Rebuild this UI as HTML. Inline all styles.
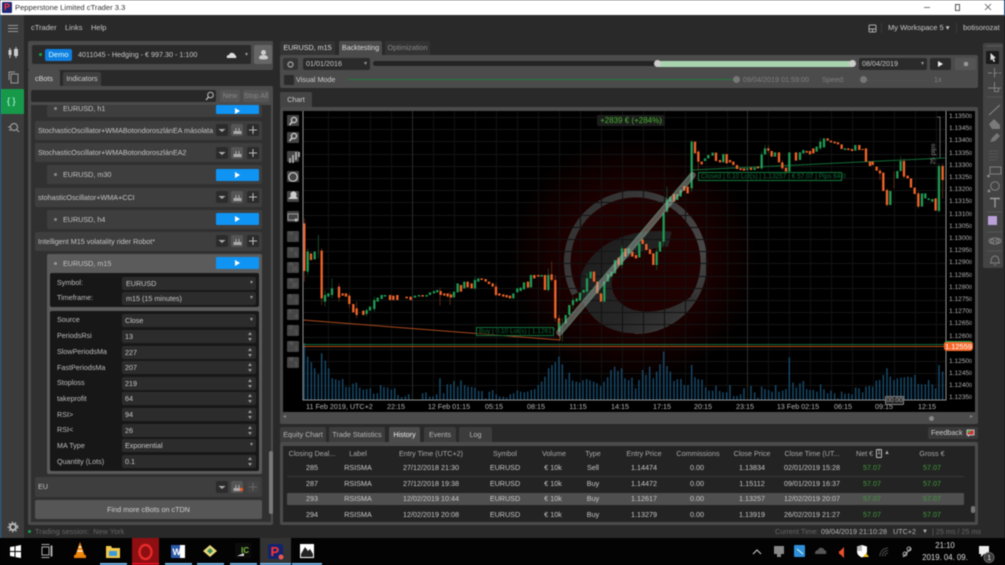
<!DOCTYPE html>
<html><head><meta charset="utf-8"><title>cTrader</title>
<style>
html,body{margin:0;padding:0;width:1005px;height:565px;overflow:hidden;background:#000}
#w{position:absolute;left:0;top:0;width:1005px;height:565px;overflow:hidden;background:#292929;font-family:"Liberation Sans",sans-serif;font-size:7.2px;color:#c8c8c8;filter:blur(.4px)}
#w div{position:absolute;box-sizing:border-box}
.t{white-space:nowrap;line-height:10px;height:10px}
.c{transform:translateX(-50%)}
.tab{background:#3c3c3c;border-radius:2px 2px 0 0;text-align:center;line-height:15px;color:#b8b8b8;white-space:nowrap}
.on{background:#4b4b4b;color:#ddd}
.row{left:35px;width:227px;background:#3e3e3e;border-radius:2px;height:19px;line-height:19px;padding-left:3px;color:#c4c4c4;white-space:nowrap}
.chi{left:47px;width:215px;background:#3e3e3e;border-radius:2px;height:19px;line-height:19px;padding-left:16px;color:#c4c4c4}
.play{left:216px;width:43px;height:12px;background:#0f94f3;border-radius:1px;color:#fff}
.play:after{content:"";position:absolute;left:19px;top:3px;border-left:5px solid #fff;border-top:3px solid transparent;border-bottom:3px solid transparent}
.b{width:12px;height:12px;background:#2b2b2b;border-radius:2px}
.f{left:122px;width:134px;height:13px;background:#2c2c2c;border-radius:2px;line-height:13px;padding-left:3px;color:#c8c8c8}
.l{left:57px;color:#bdbdbd}
.ar:after{content:"▾";position:absolute;right:3px;top:0;font-size:6px;color:#999}
.sp:after{content:"";position:absolute;right:4px;top:2px;border-bottom:3px solid #999;border-left:2px solid transparent;border-right:2px solid transparent}
.sp:before{content:"";position:absolute;right:4px;bottom:2px;border-top:3px solid #999;border-left:2px solid transparent;border-right:2px solid transparent}
.cb{left:287px;width:12px;height:11px;background:#454545;border-radius:1px;color:#6a6a6a;font-size:5px;line-height:6px;padding-left:2px}
.cb span{position:absolute;right:1.500px;bottom:0;line-height:5px}
.y{left:949px;color:#b0b0b0;font-size:6.600px}
.y small{font-size:5px}
.x{top:402px;color:#b4b4b4}
.g{color:#3f9a3a}
svg{position:absolute;overflow:visible}
</style></head><body>
<div id="w">
<!-- title bar -->
<div style="left:0;top:0;width:1005px;height:15px;background:#fff"></div>
<div style="left:2px;top:2px;width:10px;height:11px;background:#1c2a78;border-radius:1px"></div>
<div style="left:4px;top:3px;color:#f33;font:bold 9px 'Liberation Sans',sans-serif;line-height:9px">P</div>
<div class="t" style="left:15px;top:3px;color:#333;font-size:7.600px">Pepperstone Limited cTrader 3.3</div>
<div style="left:924px;top:7px;width:6px;height:1px;background:#777"></div>
<div style="left:955px;top:4px;width:5px;height:7px;border:1px solid #555"></div>
<svg style="left:984px;top:3px" width="8" height="8"><path d="M1 1L7 7M7 1L1 7" stroke="#555" stroke-width=".8"/></svg>
<div style="left:1004px;top:0;width:1px;height:16px;background:#3b78b5"></div>

<!-- left sidebar -->
<div style="left:0;top:15px;width:24px;height:523px;background:#3b3b3b;border-left:1px solid #3877b0"></div>
<div style="left:8px;top:25px;width:10px;height:1.300px;background:#999;box-shadow:0 3px 0 #999,0 6px 0 #999"></div>
<svg style="left:7px;top:47px" width="12" height="12"><path d="M3 1V11M9 0V11" stroke="#bbb" stroke-width="1"/><rect x="1.500" y="3" width="3" height="5" fill="#ccc"/><rect x="7" y="2" width="4" height="7" fill="#ccc"/></svg>
<svg style="left:8px;top:71px" width="11" height="13"><rect x="3" y="3" width="7" height="9" fill="none" stroke="#999"/><path d="M1 9V1H7" fill="none" stroke="#999"/></svg>
<div style="left:1px;top:89px;width:23px;height:25px;background:#169a4a"></div>
<div class="t" style="left:7px;top:96px;font-size:9px;color:#cfe">{ }</div>
<svg style="left:7px;top:121px" width="13" height="13"><circle cx="7" cy="6" r="3.500" fill="none" stroke="#999" stroke-width="1.200"/><path d="M9.500 8.500L12 11M1 6H3M2 9H4" stroke="#999" stroke-width="1.200"/></svg>
<svg style="left:7px;top:521px" width="12" height="12"><circle cx="6" cy="6" r="3" fill="none" stroke="#bbb" stroke-width="2"/><circle cx="6" cy="6" r="4.800" fill="none" stroke="#bbb" stroke-width="1.200" stroke-dasharray="1.500 2"/></svg>

<!-- menu -->
<div class="t" style="left:31px;top:23px;font-size:7.500px">cTrader</div>
<div class="t" style="left:65px;top:23px;font-size:7.500px">Links</div>
<div class="t" style="left:91px;top:23px;font-size:7.500px">Help</div>
<svg style="left:868px;top:24px" width="9" height="9"><rect x="1" y="1" width="7" height="7" rx="1" fill="none" stroke="#aaa"/><path d="M1 5H8M4.500 5V8" fill="none" stroke="#aaa"/></svg>
<div style="left:881px;top:23px;width:1px;height:10px;background:#3a3a3a"></div>
<div class="t" style="left:888px;top:23px;font-size:7.500px">My Workspace 5 ▾</div>
<div style="left:956px;top:23px;width:1px;height:10px;background:#3a3a3a"></div>
<div class="t" style="left:963px;top:23px;font-size:7.500px">botisorozat</div>

<!-- account -->
<div style="left:28px;top:41px;width:245px;height:29px;background:#4a4a4a;border-radius:2px"></div>
<div style="left:32px;top:45px;width:219px;height:19px;background:#2a2a2a;border-radius:2px"></div>
<div style="left:39px;top:53px;width:3px;height:3px;background:#19a04a;border-radius:50%"></div>
<div style="left:45px;top:49px;width:27px;height:12px;background:#0e7fe0;border-radius:2px;color:#dff;text-align:center;line-height:12px;font-size:7.500px">Demo</div>
<div class="t" style="left:78px;top:50px;color:#c8c8c8">4011045 - Hedging - € 997.30 - 1:100</div>
<svg style="left:226px;top:52px" width="11" height="7"><path d="M1 6Q0 3 3 3Q4 0 7 1Q9 2 9 3Q11 4 10 6Z" fill="#ddd"/></svg>
<div class="t" style="left:245px;top:50px;font-size:6px;color:#999">▾</div>
<div style="left:254px;top:45px;width:18px;height:19px;background:#666;border-radius:2px"></div>
<svg style="left:258px;top:49px" width="11" height="11"><circle cx="5.500" cy="3.500" r="2.500" fill="#ccc"/><path d="M1 9Q1 6 5.500 6Q10 6 10 9Q10 10.500 5.500 10.500Q1 10.500 1 9Z" fill="#ccc"/></svg>

<!-- cbots panel -->
<div class="tab on" style="left:28px;top:70px;width:32px;height:16px;line-height:17px">cBots</div>
<div class="tab" style="left:63px;top:72px;width:38px;height:14px;line-height:14px;background:#3f3f3f;color:#ccc">Indicators</div>
<div style="left:28px;top:86px;width:245px;height:439px;background:#4b4b4b;border-radius:0 2px 2px 2px"></div>
<div style="left:31px;top:90px;width:185px;height:12px;background:#282828;border-radius:2px"></div>
<svg style="left:205px;top:91px" width="10" height="10"><circle cx="5.500" cy="4" r="2.800" fill="none" stroke="#bbb"/><path d="M3.500 6L1 9" stroke="#bbb" stroke-width="1.300"/></svg>
<div style="left:220px;top:90px;width:20px;height:12px;background:#555;border-radius:2px;color:#888;text-align:center;line-height:12px">New</div>
<div style="left:243px;top:90px;width:26px;height:12px;background:#555;border-radius:2px;color:#888;text-align:center;line-height:12px;white-space:nowrap">Stop All</div>
<div style="left:31px;top:105px;width:240px;height:417px;background:#303030"></div>

<div class="chi" style="top:105px;height:12px;line-height:7px">EURUSD, h1</div>
<div class="play" style="top:105px;height:9px"></div>
<div class="row" style="top:121px">StochasticOscillator+WMABotondoroszlánEA másolata</div>
<div class="row" style="top:143px">StochasticOscillator+WMABotondoroszlánEA2</div>
<div class="chi" style="top:165px">EURUSD, m30</div><div class="play" style="top:169px"></div>
<div class="row" style="top:188px">stohasticOscillator+WMA+CCI</div>
<div class="chi" style="top:210px">EURUSD, h4</div><div class="play" style="top:213px"></div>
<div class="row" style="top:232px">Intelligent M15 volatality rider Robot*</div>
<div class="chi" style="top:254px;height:220px;background:#5b5b5b">EURUSD, m15</div><div class="play" style="top:257px"></div>
<div style="left:50px;top:273px;width:209px;height:34px;background:#171717;border-radius:2px"></div>
<div style="left:50px;top:311px;width:209px;height:160px;background:#171717;border-radius:2px"></div>
<div class="t l" style="top:278px">Symbol:</div><div class="f ar" style="top:277px;padding-left:4px">EURUSD</div>
<div class="t l" style="top:293px">Timeframe:</div><div class="f ar" style="top:292px;padding-left:4px">m15 (15 minutes)</div>
<div class="t l" style="top:315px">Source</div><div class="f ar" style="top:314px">Close</div>
<div class="t l" style="top:331px">PeriodsRsi</div><div class="f sp" style="top:330px">13</div>
<div class="t l" style="top:347px">SlowPeriodsMa</div><div class="f sp" style="top:346px">227</div>
<div class="t l" style="top:363px">FastPeriodsMa</div><div class="f sp" style="top:361px">207</div>
<div class="t l" style="top:378px">Stoploss</div><div class="f sp" style="top:377px">219</div>
<div class="t l" style="top:394px">takeprofit</div><div class="f sp" style="top:392px">64</div>
<div class="t l" style="top:410px">RSI&gt;</div><div class="f sp" style="top:408px">94</div>
<div class="t l" style="top:425px">RSI&lt;</div><div class="f sp" style="top:424px">26</div>
<div class="t l" style="top:441px">MA Type</div><div class="f ar" style="top:439px">Exponential</div>
<div class="t l" style="top:457px">Quantity (Lots)</div><div class="f sp" style="top:455px">0.1</div>
<div class="row" style="top:477px;height:20px;line-height:20px">EU</div>
<div style="left:35px;top:500px;width:227px;height:19px;background:#565656;border-radius:2px;color:#d0d0d0;text-align:center;line-height:19px">Find more cBots on cTDN</div>
<div class="b" style="left:216px;top:124px"></div><div class="b" style="left:231px;top:124px;background:#555"></div><div class="b" style="left:247px;top:124px"></div>
<div class="b" style="left:216px;top:147px"></div><div class="b" style="left:231px;top:147px;background:#555"></div><div class="b" style="left:247px;top:147px"></div>
<div class="b" style="left:216px;top:191px"></div><div class="b" style="left:231px;top:191px;background:#555"></div><div class="b" style="left:247px;top:191px"></div>
<div class="b" style="left:216px;top:235px"></div><div class="b" style="left:231px;top:235px;background:#555"></div><div class="b" style="left:247px;top:235px"></div>
<div class="b" style="left:216px;top:481px"></div><div class="b" style="left:231px;top:481px;background:#555"></div><div class="b" style="left:247px;top:481px;background:#444"></div>
<svg style="left:0;top:0" width="1005" height="565" fill="none" stroke="#bdbdbd"><path d="M249 130h8M253 126v8M249 153h8M253 149v8M249 197h8M253 193v8M249 241h8M253 237v8"/><path d="M249 487h8M253 483v8" stroke="#666"/><path d="M218.500 129l3.500 3 3.500-3zM218.500 152l3.500 3 3.500-3zM218.500 196l3.500 3 3.500-3zM218.500 240l3.500 3 3.500-3zM218.500 486l3.500 3 3.500-3z" fill="#aaa" stroke="none"/><path d="M233.500 134v-3h2v-3h1v3h2v-3h1v3h2v3zM233.500 157v-3h2v-3h1v3h2v-3h1v3h2v3zM233.500 201v-3h2v-3h1v3h2v-3h1v3h2v3zM233.500 245v-3h2v-3h1v3h2v-3h1v3h2v3zM233.500 491v-3h2v-3h1v3h2v-3h1v3h2v3z" fill="#aaa" stroke="none"/><rect x="240" y="488" width="3" height="3" fill="#f05a1e" stroke="none"/></svg>
<div style="left:269px;top:451px;width:4px;height:63px;background:#7a7a7a;border-radius:2px"></div>
<div style="left:54px;top:107px;width:3px;height:3px;border-radius:50%;background:#888"></div>
<div style="left:54px;top:173px;width:3px;height:3px;border-radius:50%;background:#888"></div>
<div style="left:54px;top:218px;width:3px;height:3px;border-radius:50%;background:#888"></div>
<div style="left:54px;top:262px;width:3px;height:3px;border-radius:50%;background:#999"></div>
<div style="left:28px;top:530px;width:3px;height:3px;border-radius:50%;background:#19a04a"></div>
<div class="t" style="left:35px;top:527px;color:#666;letter-spacing:.1px">Trading session: &nbsp;New York</div>

<!-- top tabs -->
<div class="tab on" style="left:280px;top:41px;width:55px;height:14px;background:#333;line-height:14px">EURUSD, m15</div>
<div class="tab on" style="left:339px;top:41px;width:43px;height:14px;line-height:14px;background:#4b4b4b">Backtesting</div>
<div class="tab" style="left:385px;top:41px;width:45px;height:14px;line-height:14px;background:#333;color:#888">Optimization</div>
<div style="left:280px;top:55px;width:698px;height:33px;background:#4b4b4b;border-radius:2px"></div>
<div style="left:283px;top:58px;width:15px;height:12px;background:#333;border-radius:2px"></div>
<svg style="left:286px;top:59.500px" width="9" height="9"><circle cx="4.500" cy="4.500" r="2.500" fill="none" stroke="#999" stroke-width="1.400"/></svg>
<div class="f ar" style="left:303px;top:58px;width:67px;height:12px;line-height:12px;background:#2a2a2a">01/01/2016</div>
<div style="left:373px;top:61px;width:285px;height:5px;background:#242424;border-radius:3px"></div>
<div style="left:657px;top:61px;width:196px;height:6px;background:#a8d3ae"></div>
<div style="left:654px;top:60px;width:7px;height:7px;background:#ccc;border-radius:50%"></div>
<div style="left:849px;top:60px;width:7px;height:7px;background:#ccc;border-radius:50%"></div>
<div class="f ar" style="left:859px;top:58px;width:68px;height:12px;line-height:12px;background:#2a2a2a">08/04/2019</div>
<div style="left:930px;top:58px;width:21px;height:12px;background:#2a2a2a;border-radius:2px"></div>
<div style="left:938px;top:61px;border-left:5px solid #eee;border-top:3px solid transparent;border-bottom:3px solid transparent"></div>
<div style="left:955px;top:58px;width:21px;height:12px;background:#555;border-radius:2px"></div>
<div style="left:964px;top:62px;width:4px;height:4px;background:#999"></div>
<div style="left:284px;top:75px;width:10px;height:10px;background:#2a2a2a;border-radius:1px"></div>
<div class="t" style="left:296px;top:75px;color:#ccc">Visual Mode</div>
<div style="left:348px;top:79px;width:389px;height:1px;background:#1f7a3e"></div>
<div style="left:733px;top:76px;width:7px;height:7px;background:#777;border-radius:50%"></div>
<div class="t" style="left:743px;top:75px;color:#7f7f7f">09/04/2019 01:59:00</div>
<div class="t" style="left:822px;top:75px;color:#7f7f7f">Speed:</div>
<div style="left:860px;top:76px;width:7px;height:7px;background:#777;border-radius:50%"></div>
<div style="left:867px;top:79.500px;width:60px;height:1px;border-top:1px dotted #555"></div>
<div class="t" style="left:934px;top:75px;color:#7f7f7f">1x</div>

<!-- right toolbar -->
<div style="left:983px;top:43px;width:20px;height:225px;background:#434343;border-radius:2px"></div>
<div style="left:986px;top:51px;width:13px;height:13px;background:#1b1b1b;border-radius:1px"></div>
<svg style="left:975px;top:40px" width="30" height="235" fill="none" stroke="#808080" stroke-width="1">
<path d="M12 6h15" stroke="#777" stroke-dasharray="1 1"/>
<path d="M15.500 13l5.500 5-2.300.400 1.400 3-1.500.600-1.400-3-1.700 1.500z" fill="#ddd" stroke="none"/>
<path d="M13 33h13M19.500 28v11" stroke-dasharray="4 1.500"/>
<path d="M19.500 42v6M13 48h13"/><rect x="19.500" y="48" width="4" height="3.500"/>
<path d="M12 57h15" stroke="#555"/>
<path d="M14 75L25 65" stroke="#8a8a8a"/>
<path d="M14 84l5-5 6 6v4h-8z" fill="#7a7a7a" stroke="none"/>
<path d="M15 102l2-4 5-5 3 3-5 5z" fill="#777" stroke="none"/>
<path d="M14 111h10M14 114h10M14 117h10M14 120h7" stroke="#666" stroke-dasharray="1 1"/>
<rect x="15" y="127" width="11" height="7"/><circle cx="13.500" cy="136" r="1" fill="#999"/>
<circle cx="20" cy="146" r="4.300"/><circle cx="14" cy="151" r="1" fill="#999"/>
<path d="M15 158.500h10M20 158.500v9" stroke="#9a9a9a" stroke-width="1.400"/>
<path d="M12 172h15M12 192h15M12 211h15" stroke="#555"/>
<ellipse cx="20" cy="201" rx="6" ry="3"/><circle cx="17.500" cy="201" r="1.500"/><circle cx="22.500" cy="201" r="1.500"/>
<path d="M16 223q0-7 4-7t4 7zM15 223h10M19 225h2"/>
</svg>
<div style="left:988px;top:216px;width:9px;height:9px;background:#b9a0d8"></div>

<!-- chart panel -->
<div class="tab on" style="left:280px;top:92px;width:32px;height:15px;background:#444;color:#ccc;line-height:16px">Chart</div>
<div style="left:280px;top:107px;width:698px;height:317px;background:#4b4b4b;border-radius:2px"></div>
<div style="left:283px;top:111px;width:692px;height:301px;background:#000"></div>
<div style="left:303px;top:111px;width:643px;height:289px;background:radial-gradient(circle 125px at 330px 150px,#270000 0,#200000 50%,#0c0000 82%,#000 100%)"></div>
<div class="cb" style="top:115px"></div><div class="cb" style="top:132px"></div><div class="cb" style="top:151px"></div><div class="cb" style="top:171px"></div><div class="cb" style="top:191px"></div><div class="cb" style="top:211px"></div>
<svg style="left:283px;top:111px" width="20" height="120" fill="none" stroke="#ccc"><circle cx="11" cy="9" r="2.600" stroke-width="1.300"/><path d="M9 11L6.500 14" stroke-width="1.500"/><circle cx="11" cy="25" r="2.600" stroke-width="1.300"/><path d="M9 27L6.500 30" stroke-width="1.500"/><path d="M7 47v5M10 44v8M13 41v8M16 41v5" stroke-width="1.800" stroke="#aaa"/><circle cx="10" cy="66" r="4.300" stroke-width="1.200"/><path d="M8 85a3 3 0 1 1 5 0l2 3H5z" fill="#ccc" stroke="none"/><rect x="5" y="103" width="10" height="6" stroke-width="1" stroke="#999"/><circle cx="13" cy="109" r="1.500" fill="#bbb" stroke="none"/></svg>
<div class="cb" style="top:231px">m<span>1</span></div><div class="cb" style="top:247px">m<span>5</span></div><div class="cb" style="top:262px">m<span>15</span></div><div class="cb" style="top:278px">m<span>30</span></div><div class="cb" style="top:294px">h<span>1</span></div><div class="cb" style="top:309px">h<span>4</span></div><div class="cb" style="top:325px">D<span>1</span></div><div class="cb" style="top:341px">W<span>1</span></div><div class="cb" style="top:357px">M<span>1</span></div>

<svg style="left:0;top:0" width="1005" height="565" fill="none">
<defs><linearGradient id="lg" x1="0" y1="0" x2="1" y2="1"><stop offset="0" stop-color="#1c1c1c"/><stop offset=".6" stop-color="#262626"/><stop offset="1" stop-color="#3e3e3e"/></linearGradient>
<linearGradient id="lr" x1="0" y1="0" x2="1" y2="1"><stop offset="0" stop-color="#2e2e2e"/><stop offset=".7" stop-color="#474747"/><stop offset="1" stop-color="#262626"/></linearGradient></defs>
<!-- logo -->
<g transform="translate(540,170) scale(.3333)">
<circle cx="281" cy="276" r="198" fill="#1f0101"/>
<path d="M105 372A205 205 0 1 1 285 482" stroke="url(#lr)" stroke-width="20"/>
<path d="M395 185C300 175 170 200 125 310C100 400 170 490 285 490C360 490 440 440 475 365C430 400 380 425 320 425C260 425 215 390 215 340C215 280 290 235 385 230Z" fill="url(#lg)"/>
</g>
<!-- grid -->
<path stroke="#141414" stroke-width="1" d="M303 117.500h643M303 129.500h643M303 141.500h643M303 154.500h643M303 166.500h643M303 178.500h643M303 190.500h643M303 202.500h643M303 215.500h643M303 227.500h643M303 239.500h643M303 251.500h643M303 263.500h643M303 276.500h643M303 288.500h643M303 300.500h643M303 312.500h643M303 324.500h643M303 337.500h643M303 349.500h643M303 361.500h643M303 373.500h643M303 385.500h643"/>
<path stroke="#111" stroke-width="1" d="M328.500 111v289M349.500 111v289M370.500 111v289M391.500 111v289M433.500 111v289M454.500 111v289M475.500 111v289M496.500 111v289M517.500 111v289M538.500 111v289M559.500 111v289M580.500 111v289M601.500 111v289M622.500 111v289M643.500 111v289M664.500 111v289M685.500 111v289M706.500 111v289M727.500 111v289M768.500 111v289M789.500 111v289M810.500 111v289M831.500 111v289M852.500 111v289M873.500 111v289M894.500 111v289M915.500 111v289M936.500 111v289"/>
<path stroke="#2b2b2b" d="M412.500 111v289M747.500 111v289"/>

<!-- volumes -->
<g transform="translate(280,105) scale(.3333)" stroke="#174c6e" stroke-width="4.200">
<path d="M73 885V715M83 885V755M94 885V772M104 885V790M115 885V808M125 885V745M136 885V767M146 885V790M157 885V820M167 885V823M177 885V826M188 885V822M198 885V846M208 885V846M219 885V836M229 885V833M239 885V848M250 885V854M260 885V852M271 885V850M281 885V866M292 885V865M302 885V840M312 885V846M323 885V848M334 885V854M344 885V850M354 885V870M365 885V876M376 885V874M386 885V868M428 885V865M438 885V862M449 885V875M459 885V874M470 885V868M480 885V820M491 885V865M502 885V838M512 885V838M522 885V828M533 885V845M543 885V826M554 885V840M564 885V845M575 885V846M585 885V848M596 885V858M606 885V858M617 885V880M628 885V860M638 885V855M649 885V868M659 885V875M670 885V875M680 885V878M691 885V868M701 885V865M712 885V856M722 885V860M733 885V862M743 885V860M754 885V855M764 885V852M775 885V840M785 885V830M795 885V815M806 885V790M816 885V780M826 885V772M837 885V755M847 885V778M858 885V822M868 885V803M878 885V827M889 885V830M899 885V833M909 885V826M920 885V822M930 885V826M941 885V830M951 885V835M962 885V843M972 885V830M983 885V817M993 885V795M1004 885V785M1014 885V798M1025 885V790M1035 885V820M1046 885V825M1056 885V818M1067 885V850M1077 885V825"/>
</g>
<g transform="translate(640,105) scale(.3333)" stroke="#174c6e" stroke-width="4.200">
<path d="M8 885V795M18 885V810M29 885V785M40 885V820M50 885V800M60 885V778M71 885V740M81 885V783M91 885V800M102 885V828M112 885V823M123 885V822M133 885V840M144 885V840M155 885V780M165 885V817M175 885V823M186 885V824M197 885V847M207 885V857M218 885V857M228 885V842M239 885V858M249 885V862M260 885V862M270 885V840M281 885V873M291 885V873M302 885V868M312 885V850M333 885V843M344 885V862M354 885V878M365 885V845M375 885V852M386 885V855M396 885V860M407 885V840M417 885V860M428 885V857M438 885V852M448 885V757M459 885V833M469 885V848M480 885V835M490 885V828M500 885V852M510 885V855M520 885V855M531 885V860M542 885V838M552 885V853M563 885V865M573 885V857M584 885V865M594 885V880M605 885V860M615 885V866M626 885V865M636 885V868M647 885V848M657 885V850M668 885V862M678 885V845M688 885V843M698 885V845M709 885V827M719 885V825M730 885V810M741 885V790M751 885V815M762 885V825M772 885V820M783 885V818M793 885V817M804 885V815M814 885V817M825 885V810M835 885V837M845 885V838M856 885V838M866 885V825M877 885V838M887 885V850M897 885V780M908 885V800"/>
</g>

<!-- lines -->
<path d="M303 320L560 340" stroke="#a8481c" stroke-width="1"/>
<path d="M560 340V335" stroke="#a8481c"/>
<path d="M303 344.500H946" stroke="#156c38"/>
<path d="M303 346.500H946" stroke="#b84a1c"/>
<path d="M692 170L945 158" stroke="#126b35"/>

<!-- candles -->
<g transform="translate(280,105) scale(.3333)">
<path stroke="#8a3c1a" stroke-width="1.800" d="M73 340V530M115 390V450M125 430V600M177 535V590M208 565V610M230 590V640M480 548V602M510 560V600M648 535V575M815 470V530M826 510V650M837 630V695"/>
<path stroke="#14693a" stroke-width="1.800" d="M83 430V510M115 390V460M135 555V605M156 520V580M260 610V635M283 575V620M585 515V555M805 490V560M847 640V710"/>
<path stroke="#f0642a" stroke-width="7" d="M73 355V498M93 445V465M125 437V580M177 545V578M188 565V572M198 565V575M208 572V597M220 597V622M230 610V630M250 617V630M330 570V585M340 572V585M352 570V585M380 575V580M392 575V585M428 570V575M482 558V570M493 565V572M503 565V575M513 568V578M543 540V560M563 530V547M575 535V550M605 520V525M617 522V530M627 530V537M638 535V545M648 545V570M658 565V572M670 568V575M680 570V577M690 572V580M744 530V548M763 510V520M775 510V515M795 510V555M815 508V525M826 525V640M837 640V680"/>
<path stroke="#1f9a55" stroke-width="7" d="M83 440V500M104 440V463M135 570V590M145 565V575M156 550V570M260 615V627M270 605V617M283 585V612M293 578V590M305 570V582M315 570V575M405 572V578M417 570V575M440 570V575M450 562V570M462 558V565M472 555V562M522 560V577M533 535V562M553 530V550M585 525V550M595 520V530M700 565V580M712 550V562M722 548V558M732 532V553M753 510V547M785 510V515M805 510V555"/>
</g>
<g transform="translate(540,170) scale(.3333)">
<path stroke="#14693a" stroke-width="1.800" d="M58 450V495M99 380V415M141 310V375M246 225V295M350 235V300M371 120V225M381 50V130M455 0V65"/>
<path stroke="#f0642a" stroke-width="7" d="M162 305V335M172 335V370M183 370V395M236 263V285M256 235V260M277 245V260M288 255V265M308 208V222M319 222V240M330 238V252M340 250V285M402 72V95M433 48V62M443 50V70"/>
<path stroke="#1f9a55" stroke-width="7" d="M58 460V485M77 435V460M88 405V435M99 390V405M110 385V395M120 368V392M131 360V368M141 325V365M152 305V325M193 335V395M204 312V335M214 305V320M225 270V310M246 235V285M266 235V250M298 220V262M350 245V285M360 215V245M371 130V215M381 90V125M391 80V95M412 72V90M422 60V80M455 5V55"/>
</g>
<g transform="translate(640,105) scale(.3333)">
<path stroke="#14693a" stroke-width="1.800" d="M155 105V205M365 140V195M375 120V150M541 100V135M782 155V200M897 175V322"/>
<path stroke="#8a3c1a" stroke-width="1.800" d="M175 135V195M385 120V145M427 165V195M720 190V225M741 250V305M762 200V250M792 160V220M835 260V310M908 175V280"/>
<path stroke="#f0642a" stroke-width="7" d="M165 110V145M175 140V170M185 170V178M228 143V168M240 165V172M260 147V175M270 165V172M280 170V180M291 180V192M302 190V195M312 190V197M333 188V195M354 185V190M385 130V137M395 138V155M417 142V172M427 172V190M438 188V200M468 142V167M500 138V143M510 138V148M520 130V145M563 100V107M573 107V112M584 110V115M594 112V118M605 118V132M625 130V135M636 132V138M658 120V135M668 132V135M678 130V170M690 170V183M698 170V180M710 185V197M720 197V205M730 203V258M741 255V300M792 168V215M803 212V220M813 220V248M824 248V267M835 265V305M887 280V317M908 183V225"/>
<path stroke="#1f9a55" stroke-width="7" d="M155 110V200M195 160V168M205 150V160M218 143V152M250 147V172M322 190V195M344 188V195M365 148V190M375 130V148M405 142V155M448 142V200M480 142V165M490 135V145M530 125V140M541 110V130M552 100V127M615 130V135M646 120V137M751 258V300M772 198V220M782 168V198M846 265V305M856 265V280M866 280V285M877 282V290M897 183V318"/>
</g>
<!-- selected trade band -->
<g transform="translate(540,170) scale(.3333)">
<path d="M58 488L458 15" stroke="#b9b9b9" stroke-opacity=".45" stroke-width="19" stroke-linecap="round"/>
<path d="M54 482L452 12M64 492L462 20" stroke="#2fb06a" stroke-opacity=".55" stroke-width="1.800"/>
</g>
<!-- pips marker -->
<path d="M937 117H940V158" stroke="#777" stroke-width=".8" fill="none"/>
<!-- axes -->
<path d="M303 111V400H946V111" stroke="#8f8f8f" stroke-width="1"/>
</svg>
<div class="t" style="left:919px;top:149px;font-size:6.500px;color:#888;transform:rotate(-90deg);transform-origin:center;width:30px;text-align:center">25 pips</div>

<!-- trade labels -->
<div style="left:476px;top:327px;width:78px;height:9px;border:1px solid #0f6e38;color:#0e6a35;font-size:6.500px;line-height:7px;white-space:nowrap;padding-left:2px;background:rgba(0,0,0,.4)">Buy | 0.10 Lot(s) | 1.12617</div>
<div style="left:698px;top:172px;width:144px;height:8.500px;border:1px solid #0f7a3c;color:#0e7038;font-size:6.500px;line-height:7px;white-space:nowrap;padding-left:2px;background:rgba(0,0,0,.4)">Closed | 0.10 Lot(s) | 1.13257 | € 57.07 | Pips 64.0</div>
<div style="left:597px;top:115px;width:68px;height:11px;background:#1c1c1c;border-radius:2px;color:#46b32f;font-size:8px;line-height:11px;text-align:center;white-space:nowrap">+2839 € (+284%)</div>

<!-- y axis -->
<div class="t y" style="top:112px">1.1350<small>0</small></div><div class="t y" style="top:124px">1.1345<small>0</small></div><div class="t y" style="top:136px">1.1340<small>0</small></div><div class="t y" style="top:149px">1.1335<small>0</small></div><div class="t y" style="top:161px">1.1330<small>0</small></div><div class="t y" style="top:173px">1.1325<small>0</small></div><div class="t y" style="top:185px">1.1320<small>0</small></div><div class="t y" style="top:197px">1.1315<small>0</small></div><div class="t y" style="top:210px">1.1310<small>0</small></div><div class="t y" style="top:222px">1.1305<small>0</small></div><div class="t y" style="top:234px">1.1300<small>0</small></div><div class="t y" style="top:246px">1.1295<small>0</small></div><div class="t y" style="top:258px">1.1290<small>0</small></div><div class="t y" style="top:271px">1.1285<small>0</small></div><div class="t y" style="top:283px">1.1280<small>0</small></div><div class="t y" style="top:295px">1.1275<small>0</small></div><div class="t y" style="top:307px">1.1270<small>0</small></div><div class="t y" style="top:319px">1.1265<small>0</small></div><div class="t y" style="top:332px">1.1260<small>0</small></div><div class="t y" style="top:357px">1.1250<small>0</small></div><div class="t y" style="top:369px">1.1245<small>0</small></div><div class="t y" style="top:381px">1.1240<small>0</small></div><div class="t y" style="top:393px">1.1235<small>0</small></div>
<div style="left:944px;top:341px;width:29px;height:10px;background:#f5682b;border-radius:3px;color:#fff;font-size:7.500px;line-height:10px;text-align:center;border-top:1px solid #16a050">1.12559</div>
<!-- x axis -->
<div class="t x" style="left:306px">11 Feb 2019, UTC+2</div>
<div class="t x c" style="left:396px">22:15</div><div class="t x c" style="left:449px">12 Feb 01:15</div><div class="t x c" style="left:494px">05:15</div><div class="t x c" style="left:536px">08:15</div><div class="t x c" style="left:578px">11:15</div><div class="t x c" style="left:620px">14:15</div><div class="t x c" style="left:662px">17:15</div><div class="t x c" style="left:703px">20:15</div><div class="t x c" style="left:745px">23:15</div><div class="t x c" style="left:798px">13 Feb 02:15</div><div class="t x c" style="left:843px">06:15</div><div class="t x c" style="left:884px">09:15</div><div class="t x c" style="left:927px">12:15</div>
<div style="left:885px;top:396px;width:19px;height:9px;background:#222;border:1px solid #888;border-radius:1px;font-size:6.500px;line-height:7px;text-align:center;color:#bbb">00:00</div>
<div class="t" style="left:283px;top:412px;color:#888;font-size:6px">◂</div>
<div class="t" style="left:970px;top:412px;color:#888;font-size:6px">▸</div>
<div style="left:929px;top:416px;width:5px;height:5px;background:#888;border-radius:50%"></div>

<!-- bottom panel -->
<div class="tab" style="left:280px;top:427px;width:46px;height:15px">Equity Chart</div>
<div class="tab" style="left:329px;top:427px;width:56px;height:15px">Trade Statistics</div>
<div class="tab on" style="left:389px;top:427px;width:31px;height:15px;color:#eee">History</div>
<div class="tab" style="left:424px;top:427px;width:32px;height:15px">Events</div>
<div class="tab" style="left:459px;top:427px;width:33px;height:15px">Log</div>
<div style="left:928px;top:427px;width:50px;height:12px;background:#3a3a3a;border-radius:2px;color:#ccc;line-height:12px;padding-left:3px">Feedback</div>
<svg style="left:966px;top:429px" width="9" height="9"><rect x="1" y="1" width="7" height="5" fill="#c33" stroke="#ddd" stroke-width=".8"/><path d="M2 6v2l2-2" fill="#ddd"/><rect x="1.500" y="1.500" width="3" height="2" fill="#3a3"/></svg>
<div style="left:280px;top:442px;width:698px;height:83px;background:#4b4b4b;border-radius:2px"></div>
<div style="left:283px;top:446px;width:692px;height:76px;background:#232323"></div>
<div style="left:287px;top:493px;width:677px;height:12px;background:#4f4f4f;border-radius:1px"></div>
<div style="left:287px;top:476px;width:677px;height:1px;background:#383838"></div>
<div style="left:971px;top:506px;width:4px;height:7px;background:#777;border-radius:2px"></div>
<div class="t c" style="left:312px;top:449px;color:#aaa">Closing Deal...</div><div class="t c" style="left:358px;top:449px;color:#aaa">Label</div><div class="t c" style="left:431px;top:449px;color:#aaa">Entry Time (UTC+2)</div><div class="t c" style="left:505px;top:449px;color:#aaa">Symbol</div><div class="t c" style="left:554px;top:449px;color:#aaa">Volume</div><div class="t c" style="left:593px;top:449px;color:#aaa">Type</div><div class="t c" style="left:644px;top:449px;color:#aaa">Entry Price</div><div class="t c" style="left:698px;top:449px;color:#aaa">Commissions</div><div class="t c" style="left:752px;top:449px;color:#aaa">Close Price</div><div class="t c" style="left:812px;top:449px;color:#aaa">Close Time (UT...</div><div class="t" style="left:856px;top:449px;color:#aaa">Net €</div><div style="left:876px;top:449px;width:6px;height:9px;border:1px solid #bbb;border-radius:1px;font-size:6px;line-height:7px;text-align:center">1</div><div class="t" style="left:884px;top:448px;color:#aaa;font-size:6px">▲</div><div class="t c" style="left:932px;top:449px;color:#aaa">Gross €</div>

<div class="t c" style="left:312px;top:463px">285</div><div class="t c" style="left:358px;top:463px">RSISMA</div><div class="t c" style="left:431px;top:463px">27/12/2018 21:30</div><div class="t c" style="left:505px;top:463px">EURUSD</div><div class="t c" style="left:553px;top:463px">€ 10k</div><div class="t c" style="left:593px;top:463px">Sell</div><div class="t c" style="left:644px;top:463px">1.14474</div><div class="t c" style="left:697px;top:463px">0.00</div><div class="t c" style="left:752px;top:463px">1.13834</div><div class="t c" style="left:812px;top:463px">02/01/2019 15:28</div><div class="t c g" style="left:872px;top:463px">57.07</div><div class="t c g" style="left:932px;top:463px">57.07</div>

<div class="t c" style="left:312px;top:479px">287</div><div class="t c" style="left:358px;top:479px">RSISMA</div><div class="t c" style="left:431px;top:479px">27/12/2018 19:38</div><div class="t c" style="left:505px;top:479px">EURUSD</div><div class="t c" style="left:553px;top:479px">€ 10k</div><div class="t c" style="left:593px;top:479px">Buy</div><div class="t c" style="left:644px;top:479px">1.14472</div><div class="t c" style="left:697px;top:479px">0.00</div><div class="t c" style="left:752px;top:479px">1.15112</div><div class="t c" style="left:812px;top:479px">09/01/2019 16:37</div><div class="t c g" style="left:872px;top:479px">57.07</div><div class="t c g" style="left:932px;top:479px">57.07</div>

<div class="t c" style="left:312px;top:494px">293</div><div class="t c" style="left:358px;top:494px">RSISMA</div><div class="t c" style="left:431px;top:494px">12/02/2019 10:44</div><div class="t c" style="left:505px;top:494px">EURUSD</div><div class="t c" style="left:553px;top:494px">€ 10k</div><div class="t c" style="left:593px;top:494px">Buy</div><div class="t c" style="left:644px;top:494px">1.12617</div><div class="t c" style="left:697px;top:494px">0.00</div><div class="t c" style="left:752px;top:494px">1.13257</div><div class="t c" style="left:812px;top:494px">12/02/2019 20:07</div><div class="t c g" style="left:872px;top:494px">57.07</div><div class="t c g" style="left:932px;top:494px">57.07</div>

<div class="t c" style="left:312px;top:510px">294</div><div class="t c" style="left:358px;top:510px">RSISMA</div><div class="t c" style="left:431px;top:510px">12/02/2019 20:08</div><div class="t c" style="left:505px;top:510px">EURUSD</div><div class="t c" style="left:553px;top:510px">€ 10k</div><div class="t c" style="left:593px;top:510px">Buy</div><div class="t c" style="left:644px;top:510px">1.13279</div><div class="t c" style="left:697px;top:510px">0.00</div><div class="t c" style="left:752px;top:510px">1.13919</div><div class="t c" style="left:812px;top:510px">26/02/2019 21:27</div><div class="t c g" style="left:872px;top:510px">57.07</div><div class="t c g" style="left:932px;top:510px">57.07</div>

<div class="t" style="left:775px;top:527px;color:#666">Current Time:</div>
<div class="t" style="left:821px;top:527px;color:#b5b5b5">09/04/2019 21:10:28</div>
<div class="t" style="left:893px;top:527px;color:#b5b5b5">UTC+2</div>
<div class="t" style="left:922px;top:527px;color:#b5b5b5;font-size:6px">▼</div>
<div class="t" style="left:932px;top:527px;color:#666">| 25 ms / 25 ms</div>

<!-- taskbar -->
<div style="left:0;top:538px;width:1005px;height:27px;background:#030303"></div>
<div style="left:132px;top:538px;width:27px;height:27px;background:#8e0f12"></div>
<div style="left:132px;top:563px;width:27px;height:2px;background:#e81123"></div>
<div style="left:260px;top:538px;width:31px;height:27px;background:#333"></div>
<div style="left:100px;top:563px;width:27px;height:2px;background:#76b9ed"></div>
<div style="left:165px;top:563px;width:27px;height:2px;background:#76b9ed"></div>
<div style="left:197px;top:563px;width:27px;height:2px;background:#76b9ed"></div>
<div style="left:230px;top:563px;width:27px;height:2px;background:#76b9ed"></div>
<div style="left:260px;top:563px;width:31px;height:2px;background:#76b9ed"></div>
<div style="left:292px;top:563px;width:30px;height:2px;background:#76b9ed"></div>
<svg style="left:0;top:538px" width="1005" height="27">
<path d="M10 9l4.500-.7V13H10zM15.500 8.100L21 7V13h-5.500zM10 14h4.500v4.700L10 18zM15.500 14H21v6l-5.500-.9z" fill="#fff"/>
<path d="M42 9h7v8h-7zM51 8h1v10h-1z" stroke="#aaa" stroke-width="1" fill="none"/><path d="M41.500 6.500h8M41.500 19.500h8" stroke="#aaa"/>
<path d="M80 4l4.500 13h-9z" fill="#f08a0c"/><path d="M78.500 9h3M77.300 13h5.400" stroke="#fff" stroke-width="1.300"/><path d="M74 17h12v3H74z" fill="#e8820c"/>
<path d="M106 8h5l1 2h8v10h-14z" fill="#f2c94c"/><path d="M109 13h8v5h-8z" fill="#3a9ad9"/>
<ellipse cx="145.500" cy="14" rx="6" ry="7" fill="none" stroke="#e82a2a" stroke-width="2.400"/>
<rect x="171" y="7" width="14" height="13" fill="#fff"/><rect x="171" y="7" width="9" height="13" fill="#2b5aa8"/><text x="172.500" y="17" font-family="Liberation Sans" font-size="9" font-weight="bold" fill="#fff">W</text>
<path d="M203 13l7-6 7 6-7 6z" fill="#e9d97a"/><path d="M207 13l3-3 3 3-3 3z" fill="#3b8a5a"/>
<rect x="235" y="5" width="16" height="15" fill="#0b0b0b"/><text x="241" y="15" font-family="Liberation Sans" font-size="8" font-weight="bold" fill="#7fbf3f">IC</text><path d="M237 18l7-3v3z" fill="#ddd"/>
<rect x="268" y="6" width="15" height="15" rx="2" fill="#12236e"/><text x="270.500" y="18" font-family="Liberation Sans" font-size="13" font-weight="bold" fill="#f33">P</text><circle cx="281" cy="19" r="2.500" fill="#e55"/>
<rect x="300" y="6" width="14" height="14" fill="#fff"/><path d="M301 16l4-7 3 4 2-2 3 5v3h-12z" fill="#222"/>
<path d="M753 16l4-4 4 4" stroke="#bbb" fill="none" stroke-width="1.200"/>
<path d="M774 8h10v8h-3v3h-4v-3h-3z" fill="#888"/>
<rect x="794" y="7" width="11" height="12" rx="1" fill="#2f8fd8"/><path d="M797 11l6 5" stroke="#cfe"/>
<path d="M815 16q0-4 3-4 1-3 4-2 2 0 2 2 3 0 2 4z" fill="#555"/>
<path d="M840 13l4-4v11l-4-4h-1v-3z" fill="#e8502a"/>
<path d="M862 7l5 1.500v5q0 4-5 6-5-2-5-6v-5z" fill="#fff"/><path d="M862 7v6h-5v-4.500z" fill="#bbb"/><path d="M866 15l3 4h-6z" fill="#f0c020"/>
<path d="M880 18a8 8 0 0 1 8-8M882.500 18a5.500 5.500 0 0 1 5.500-5.500M885 18a3 3 0 0 1 3-3" stroke="#777" stroke-dasharray="1 .6" fill="none"/>
<path d="M903 19l8-9" stroke="#aaa" stroke-width="1.200"/><circle cx="905" cy="16" r="2" fill="none" stroke="#aaa"/><circle cx="909" cy="11" r="2" fill="none" stroke="#aaa"/>
<rect x="979" y="8" width="10" height="8" fill="#eee"/><path d="M981 16v3l3-3z" fill="#eee"/><circle cx="989" cy="19.500" r="5" fill="#3a3a3a" stroke="#666"/><text x="987.300" y="22" font-family="Liberation Sans" font-size="7" fill="#eee">1</text>
</svg>
<div class="t" style="left:945px;top:541px;font-size:7.800px;color:#ddd;transform:translateX(-50%)">21:10</div>
<div class="t" style="left:945px;top:553px;font-size:7.800px;color:#ddd;transform:translateX(-50%)">2019. 04. 09.</div>
</div>
</body></html>
